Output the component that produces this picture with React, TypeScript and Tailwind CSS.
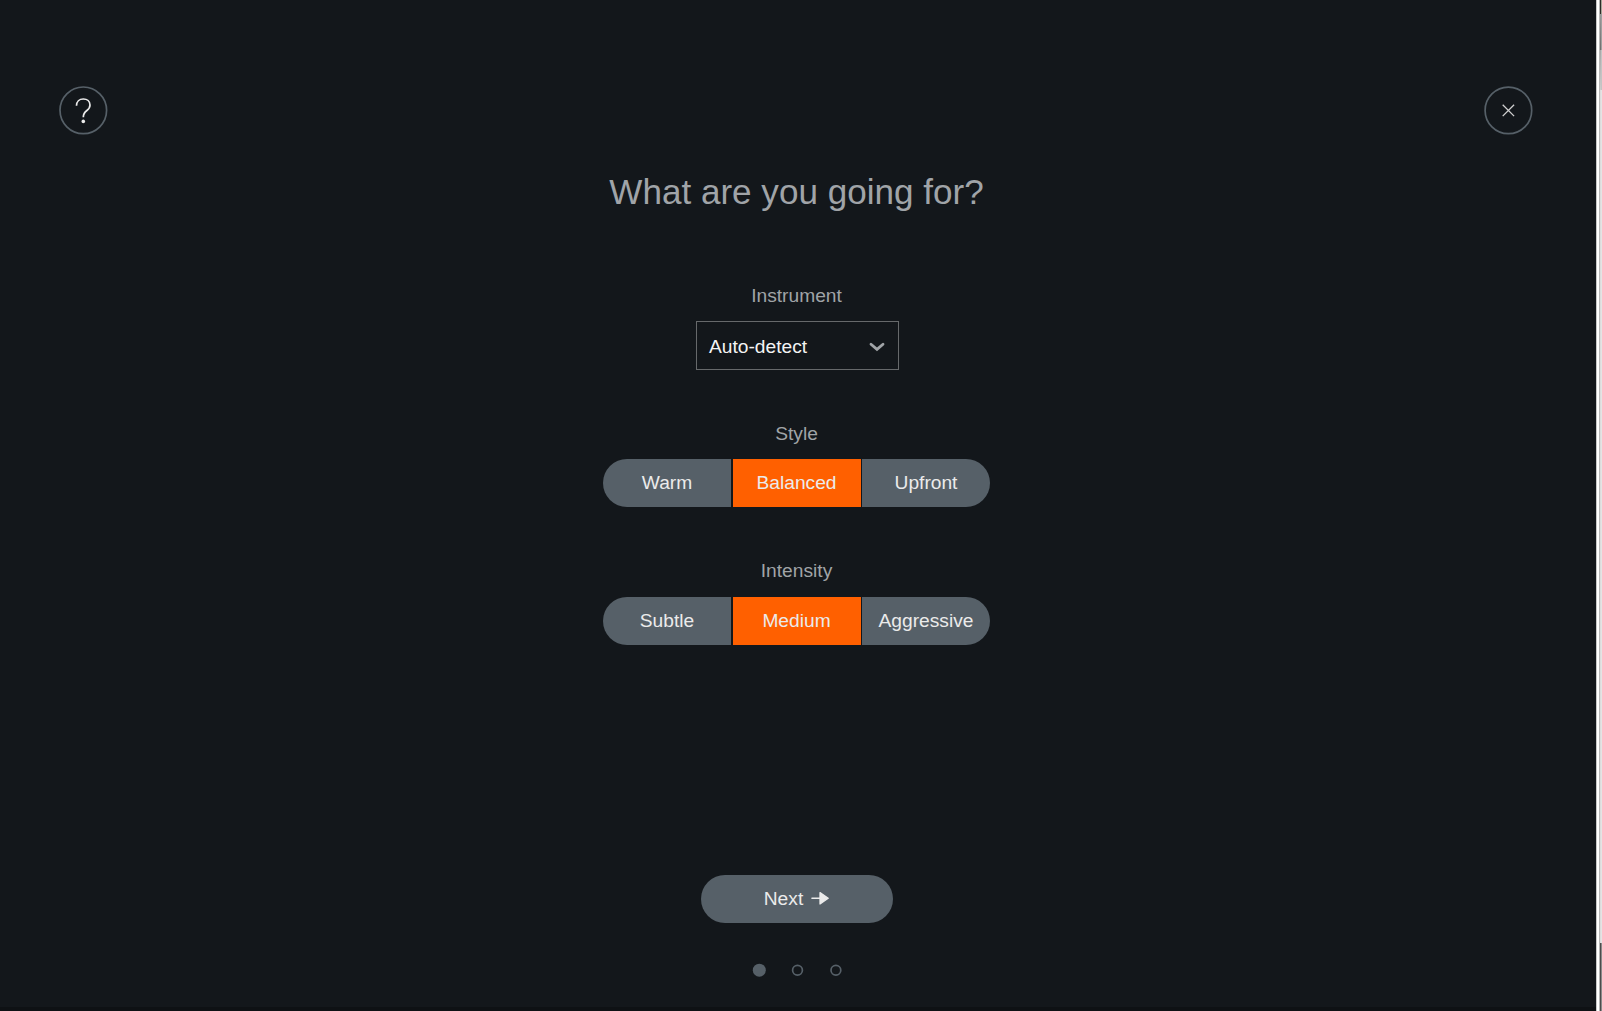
import React, { useState } from 'react';

interface SegmentedProps {
  label: string;
  options: string[];
  value: string;
  onChange: (value: string) => void;
  className?: string;
}

function Segmented({ label, options, value, onChange, className = 'gap-[13px]' }: SegmentedProps) {
  return (
    <div className={`flex flex-col items-center ${className}`}>
      <div className="h-6 text-[19.2px] leading-6 text-[#a0a4a7]">{label}</div>
      <div className="flex h-12 w-[387px] gap-[1.5px] overflow-hidden rounded-full">
        {options.map((option) =>
        <button
          key={option}
          onClick={() => onChange(option)}
          className={`flex-1 basis-0 text-[19.2px] leading-6 text-[#ebebeb] ${value === option ? 'bg-[#ff6000]' : 'bg-[#566068]'}`}>
            {option}
          </button>
        )}
      </div>
    </div>);

}

export default function App() {
  const [style, setStyle] = useState('Balanced');
  const [intensity, setIntensity] = useState('Medium');

  return (
    <div className="flex h-[1011px] w-[1602px] overflow-hidden bg-white font-['Liberation_Sans',Arial,sans-serif]">
      <main className="flex w-[1596px] shrink-0 flex-col border-b-4 border-[#0e1114] bg-[#13171b]">
        <header className="flex h-[134px] items-end justify-between pr-[64px] pl-[59px]">
          <button aria-label="Help" className="size-12 rounded-full">
            <svg width="48" height="48" viewBox="0 0 48 48" fill="none" className="overflow-visible">
              <circle cx="24.3" cy="24.3" r="23.3" stroke="#566068" strokeWidth="1.7" />
              <path d="M17.5 19.8C17.5 15.4 20.4 13 24.3 13C28.2 13 31 15.4 31 19C31 21.5 29.9 23 27.9 24.5C25.5 26.3 24.3 27.4 24.3 31.2" stroke="#ebebeb" strokeWidth="1.7" />
              <circle cx="24.3" cy="35.4" r="1.8" fill="#ebebeb" />
            </svg>
          </button>
          <button aria-label="Close" className="size-12 rounded-full">
            <svg width="48" height="48" viewBox="0 0 48 48" fill="none" className="overflow-visible">
              <circle cx="24.4" cy="24.4" r="23.3" stroke="#566068" strokeWidth="1.7" />
              <path d="M18.7 18.7L30.1 30.1M30.1 18.7L18.7 30.1" stroke="#d0d0d0" strokeWidth="1.3" />
            </svg>
          </button>
        </header>

        <div className="flex flex-col items-center pr-[3px]">
          <h1 className="mt-[36px] h-11 text-[35.1px] leading-[44px] text-[#a0a4a8]">What are you going for?</h1>

          <div className="mt-[70px] h-6 text-[19.2px] leading-6 text-[#a0a4a7]">Instrument</div>
          <button className="mt-[13px] ml-[2px] flex h-[49px] w-[203px] items-center justify-between border border-[#66696b] pt-[3px] pr-[13px] pl-3 text-[19.2px] text-[#f4f4f4]">
            Auto-detect
            <svg width="16" height="10" viewBox="0 0 16 10" fill="none" stroke="#a0a4a7" strokeWidth="2.8" strokeLinecap="round">
              <path d="M2 2.2L8 7.4L14 2.2" />
            </svg>
          </button>

          <div className="mt-[52px]">
            <Segmented label="Style" options={['Warm', 'Balanced', 'Upfront']} value={style} onChange={setStyle} />
          </div>
          <div className="mt-[52px]">
            <Segmented label="Intensity" options={['Subtle', 'Medium', 'Aggressive']} value={intensity} onChange={setIntensity} className="gap-[14px]" />
          </div>

          <button className="mt-[230px] flex h-12 w-48 items-center justify-center gap-2 rounded-full bg-[#566068] text-[19.2px] text-[#ebebeb]">
            Next
            <svg width="18" height="14" viewBox="0 0 18 14" fill="#ebebeb" stroke="#ebebeb" strokeLinecap="round" strokeLinejoin="round" className="-mt-[2px]">
              <path d="M1 7.3H9" strokeWidth="1.6" />
              <path d="M9 1.6L17.2 7.3L9 13Z" strokeWidth="1.3" />
            </svg>
          </button>

          <div className="mt-[41px] ml-px flex items-center gap-[25px]">
            <svg width="13" height="13" className="overflow-visible">
              <circle cx="6.3" cy="6.2" r="6.5" fill="#566068" />
            </svg>
            <svg width="13" height="13" fill="none" stroke="#566068" strokeWidth="1.7">
              <circle cx="6.5" cy="6.2" r="4.9" />
            </svg>
            <svg width="13" height="13" fill="none" stroke="#566068" strokeWidth="1.7">
              <circle cx="6.9" cy="6.2" r="4.9" />
            </svg>
          </div>
        </div>
      </main>

      {/* window edge */}
      <div className="w-px bg-[#c8c8c8]" />
      <div className="w-[2px] bg-white" />
      <div className="w-px bg-[#b8b8b8]" />
      <div className="flex w-px flex-col">
        <div className="h-[14px] bg-[#2c2c28]" />
        <div className="h-[36px] bg-linear-to-b from-[#9a9a9a] to-[#6e6e6e]" />
        <div className="h-[40px] bg-linear-to-b from-[#a8a8a8] to-[#cccccc]" />
        <div className="flex-1 bg-[#dcdcdc]" />
        <div className="h-[68px] bg-[#4c4c4c]" />
      </div>
      <div className="flex w-px flex-col">
        <div className="h-[14px] bg-[#a5a496]" />
        <div className="h-[36px] bg-[#a0a0a0]" />
        <div className="h-[40px] bg-[#c4c4c4]" />
        <div className="flex-1 bg-[#e4e4e4]" />
        <div className="h-[68px] bg-[#8a8a8a]" />
      </div>
    </div>);

}
